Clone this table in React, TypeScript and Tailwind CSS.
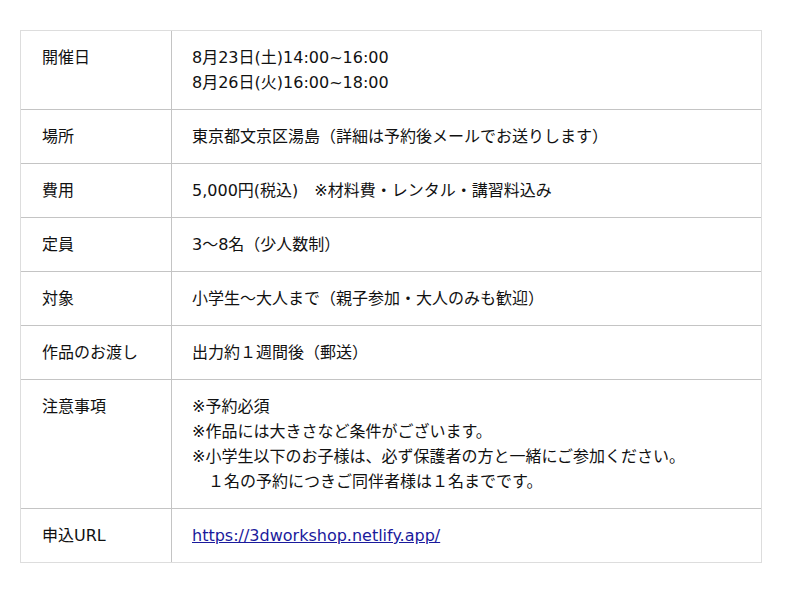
import React from "react";

const rows: { label: string; lines: React.ReactNode[] }[] = [
  { label: "開催日", lines: ["8月23日(土)14:00~16:00", "8月26日(火)16:00~18:00"] },
  { label: "場所", lines: ["東京都文京区湯島（詳細は予約後メールでお送りします）"] },
  { label: "費用", lines: ["5,000円(税込)　※材料費・レンタル・講習料込み"] },
  { label: "定員", lines: ["3〜8名（少人数制）"] },
  { label: "対象", lines: ["小学生〜大人まで（親子参加・大人のみも歓迎）"] },
  { label: "作品のお渡し", lines: ["出力約１週間後（郵送）"] },
  {
    label: "注意事項",
    lines: [
      "※予約必須",
      "※作品には大きさなど条件がございます。",
      "※小学生以下のお子様は、必ず保護者の方と一緒にご参加ください。",
      "　１名の予約につきご同伴者様は１名までです。",
    ],
  },
  {
    label: "申込URL",
    lines: [
      <a
        key="url"
        href="https://3dworkshop.netlify.app/"
        className="text-[#1a1a9c] underline"
      >
        https://3dworkshop.netlify.app/
      </a>,
    ],
  },
];

export default function App() {
  return (
    <div
      className="min-h-[593px] bg-white pl-[20px] pt-[30px] text-[16px] leading-[25px] text-[#111]"
      style={{ fontFamily: '"DejaVu Sans", "Noto Sans CJK JP", sans-serif' }}
    >
      <div className="w-[742px] border border-[#dddddd]">
        {rows.map((row, i) => (
          <div
            key={row.label}
            className={`flex ${i === 0 ? "" : "border-t border-[#c4c4c4]"}`}
          >
            <div className="w-[150px] shrink-0 px-[21px] py-[14px]">{row.label}</div>
            <div className="flex-1 border-l border-[#c4c4c4] px-[20px] py-[14px]">
              {row.lines.map((line, j) => (
                <div key={j} className="whitespace-pre">
                  {line}
                </div>
              ))}
            </div>
          </div>
        ))}
      </div>
    </div>
  );
}
